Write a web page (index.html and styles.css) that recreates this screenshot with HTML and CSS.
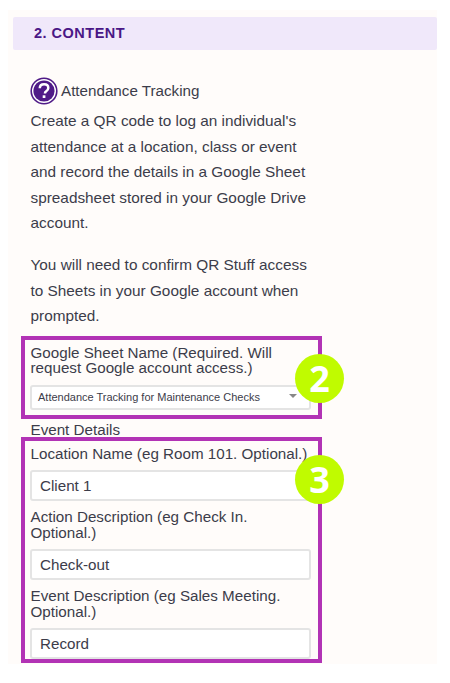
FILE: index.html
```html
<!DOCTYPE html>
<html lang="en">
<head>
    <meta charset="UTF-8">
    <title>QR Content</title>
    <link rel="stylesheet" href="styles.css">
</head>
<body>
    <div class="panel">
        <h2 class="panel-title">2. CONTENT</h2>

        <div class="panel-body">
            <div class="type-row">
                <svg class="help-icon" width="28" height="28" viewBox="0 0 28 28">
                    <circle cx="14" cy="14" r="12.8" fill="#fff" stroke="#4f1a87" stroke-width="1.6"/>
                    <circle cx="14" cy="14" r="10.6" fill="#4f1a87"/>
                    <path d="M9.8 11.2c0-2.5 1.9-3.9 4.3-3.9s4.2 1.4 4.2 3.6c0 1.7-1 2.5-2.1 3.3-.9.6-1.2 1-1.2 1.9v.4" fill="none" stroke="#fff" stroke-width="2.5"/>
                    <rect x="12.7" y="18.3" width="2.7" height="2.7" fill="#fff"/>
                </svg>
                <span class="type-name">Attendance Tracking</span>
            </div>

            <p class="intro first">Create a QR code to log an individual's attendance at a location, class or event and record the details in a Google Sheet spreadsheet stored in your Google Drive account.</p>
            <p class="intro second">You will need to confirm QR Stuff access to Sheets in your Google account when prompted.</p>

            <div class="callout sheet">
                <label class="field-label">Google Sheet Name (Required. Will request Google account access.)</label>
                <div class="select-box">
                    <span>Attendance Tracking for Maintenance Checks</span>
                    <i class="caret"></i>
                </div>
                <span class="badge">2</span>
            </div>

            <div class="section-label">Event Details</div>

            <div class="callout details">
                <label class="field-label">Location Name (eg Room 101. Optional.)</label>
                <input class="text-input" type="text" value="Client 1">
                <label class="field-label">Action Description (eg Check In. Optional.)</label>
                <input class="text-input" type="text" value="Check-out">
                <label class="field-label">Event Description (eg Sales Meeting. Optional.)</label>
                <input class="text-input" type="text" value="Record">
                <span class="badge">3</span>
            </div>
        </div>
    </div>
</body>
</html>
```

FILE: styles.css
```css
body, html {
    margin: 0;
    padding: 0;
    background: #fff;
    font-family: "Liberation Sans", Arial, sans-serif;
    color: #3c3c4a;
}

.panel {
    width: 429px;
    height: 654px;
    margin: 10px 0 0 8px;
    padding-top: 7px;
    box-sizing: border-box;
    background: #fffcfa;
}

.panel-title {
    margin: 0 0 0 5px;
    padding: 0 0 0 21px;
    height: 33px;
    line-height: 33px;
    font-size: 14.5px;
    letter-spacing: 0.5px;
    background: #f0e8fa;
    border-radius: 2px;
    color: #4a1786;
}

.panel-body {
    padding: 27px 0 0 13px;
}

.type-row {
    display: flex;
    align-items: center;
    gap: 3px;
    margin-left: 9px;
    height: 28px;
    font-size: 15.2px;
}

.type-name {
    padding-bottom: 2px;
}

.help-icon {
    flex: none;
}

.intro {
    width: 280px;
    margin: 0 0 0 9.5px;
    font-size: 15.35px;
    line-height: 25.6px;
}

.first {
    margin-top: 3px;
}

.second {
    margin-top: 16px;
}

.callout {
    position: relative;
    width: 301px;
    box-sizing: border-box;
    border: 4px solid #b233b5;
    padding: 5px 7px 0 5px;
}

.sheet {
    height: 83px;
    margin-top: 7px;
}

.details {
    height: 226px;
}

.field-label {
    display: block;
    margin-left: 0.5px;
    font-size: 15.2px;
    line-height: 15.5px;
}

.select-box {
    display: flex;
    justify-content: space-between;
    align-items: center;
    height: 25px;
    margin-top: 9px;
    padding: 0 12px 0 6px;
    box-sizing: border-box;
    background: #fff;
    border: 2px solid #e4e4e4;
    border-radius: 3px;
    font-size: 11px;
}

.caret {
    width: 0;
    height: 0;
    margin-bottom: 2px;
    border-left: 4px solid transparent;
    border-right: 4px solid transparent;
    border-top: 4px solid #888;
}

.section-label {
    margin: 3px 0 0 9.5px;
    font-size: 15.2px;
    line-height: 15px;
}

.text-input {
    display: block;
    width: 281px;
    height: 31px;
    margin: 9px 0 8px;
    padding: 0 8px;
    box-sizing: border-box;
    background: #fff;
    border: 2px solid #e4e4e4;
    border-radius: 3px;
    font-family: inherit;
    font-size: 15.2px;
    color: #3c3c4a;
}

.badge {
    position: absolute;
    right: -26px;
    top: 14px;
    width: 49px;
    height: 49px;
    border-radius: 50%;
    background: #c0fb00;
    color: #fff;
    font-family: "Open Sans", sans-serif;
    font-weight: 700;
    font-size: 36px;
    line-height: 49px;
    text-align: center;
}
```
